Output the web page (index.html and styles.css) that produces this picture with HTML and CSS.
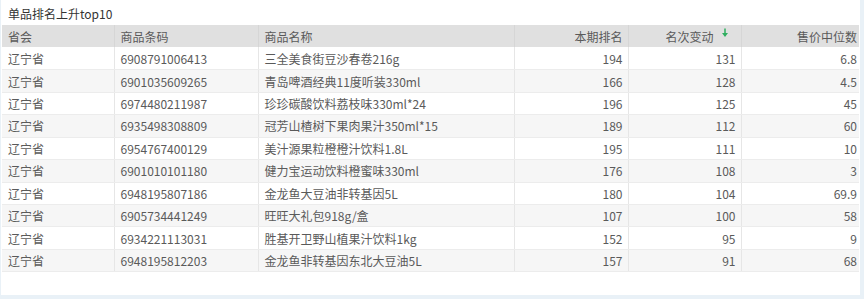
FILE: index.html
```html
<!DOCTYPE html>
<html lang="zh">
<head>
  <meta charset="UTF-8">
  <title>单品排名上升top10</title>
  <link rel="stylesheet" href="styles.css">
</head>
<body>

  <div class="panel">
    <div class="panel-title">单品排名上升top10</div>

    <table class="rank-table">
      <colgroup>
        <col style="width:112px">
        <col style="width:144px">
        <col style="width:256px">
        <col style="width:114px">
        <col style="width:113px">
        <col style="width:118px">
      </colgroup>
      <thead>
        <tr>
          <th>省会</th>
          <th>商品条码</th>
          <th>商品名称</th>
          <th class="num">本期排名</th>
          <th class="num sorted">名次变动
            <svg class="sort-icon" viewBox="0 0 8 10">
              <path d="M4 0.5v7" />
              <path d="M1 5L4 9 7 5z" class="head" />
            </svg>
          </th>
          <th class="num">售价中位数</th>
        </tr>
      </thead>
      <tbody>
        <tr><td>辽宁省</td><td>6908791006413</td><td>三全美食街豆沙春卷216g</td><td class="num">194</td><td class="num">131</td><td class="num">6.8</td></tr>
        <tr><td>辽宁省</td><td>6901035609265</td><td>青岛啤酒经典11度听装330ml</td><td class="num">166</td><td class="num">128</td><td class="num">4.5</td></tr>
        <tr><td>辽宁省</td><td>6974480211987</td><td>珍珍碳酸饮料荔枝味330ml*24</td><td class="num">196</td><td class="num">125</td><td class="num">45</td></tr>
        <tr><td>辽宁省</td><td>6935498308809</td><td>冠芳山楂树下果肉果汁350ml*15</td><td class="num">189</td><td class="num">112</td><td class="num">60</td></tr>
        <tr><td>辽宁省</td><td>6954767400129</td><td>美汁源果粒橙橙汁饮料1.8L</td><td class="num">195</td><td class="num">111</td><td class="num">10</td></tr>
        <tr><td>辽宁省</td><td>6901010101180</td><td>健力宝运动饮料橙蜜味330ml</td><td class="num">176</td><td class="num">108</td><td class="num">3</td></tr>
        <tr><td>辽宁省</td><td>6948195807186</td><td>金龙鱼大豆油非转基因5L</td><td class="num">180</td><td class="num">104</td><td class="num">69.9</td></tr>
        <tr><td>辽宁省</td><td>6905734441249</td><td>旺旺大礼包918g/盒</td><td class="num">107</td><td class="num">100</td><td class="num">58</td></tr>
        <tr><td>辽宁省</td><td>6934221113031</td><td>胜基开卫野山植果汁饮料1kg</td><td class="num">152</td><td class="num">95</td><td class="num">9</td></tr>
        <tr><td>辽宁省</td><td>6948195812203</td><td>金龙鱼非转基因东北大豆油5L</td><td class="num">157</td><td class="num">91</td><td class="num">68</td></tr>
      </tbody>
    </table>
  </div>

</body>
</html>
```

FILE: styles.css
```css
* { margin: 0; padding: 0; box-sizing: border-box; }
body {
  background: #e9f1f7;
  font-family: "Noto Sans CJK SC", "Open Sans", sans-serif;
  width: 864px;
  height: 299px;
  overflow: hidden;
}

/* PANEL */
.panel {
  margin-left: 1px;
  width: 859px;
  height: 295px;
  background: #fff;
  padding: 0 1px;
}

.panel-title {
  height: 25px;
  line-height: 27px;
  padding-left: 6px;
  font-size: 12px;
  color: #333;
}

/* TABLE */
.rank-table {
  width: 857px;
  border-collapse: collapse;
  table-layout: fixed;
  font-size: 12px;
  color: #5a5a5a;
}
.rank-table th,
.rank-table td {
  height: 22.45px;
  padding: 0 6px;
  text-align: left;
  font-weight: normal;
  white-space: nowrap;
  border-left: 1px solid #e6e6e6;
  border-bottom: 1px solid #ececec;
}
.rank-table th:first-child,
.rank-table td:first-child { border-left: none; }
.rank-table th { background: #e0e0e0; color: #5a5a5a; border-left-color: #d6d6d6; border-bottom: none; }
.rank-table tbody tr:nth-child(even) td { background: #f6f6f6; }
.rank-table .num { text-align: right; padding-right: 5px; }
.rank-table .sorted { padding-right: 27px; }
.rank-table td:last-child,
.rank-table th:last-child { padding-right: 2px; }

.sorted { position: relative; }
.sort-icon {
  position: absolute;
  right: 12px;
  top: 3px;
  width: 8px;
  height: 10px;
  fill: none;
  stroke: #2fae5f;
  stroke-width: 1.5;
}
.sort-icon .head { fill: #2fae5f; stroke: none; }
```
